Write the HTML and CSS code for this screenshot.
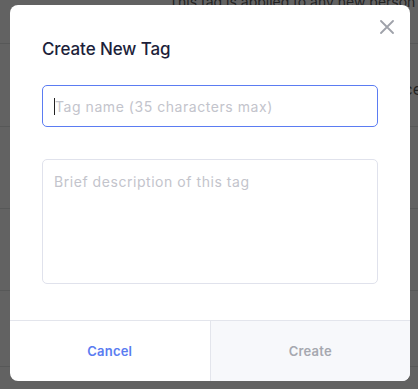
FILE: index.html
```html
<!DOCTYPE html>
<html>
<head>
<meta charset="utf-8">
<link rel="stylesheet" href="styles.css">
</head>
<body>
<div class="bg">
  <div class="bg-text">This tag is applied to any new person</div>
  <div class="bg-row r1"></div>
  <div class="bg-row r2"><span class="bg-side">ce</span></div>
  <div class="bg-row r3"></div>
  <div class="bg-row r4"></div>
  <div class="bg-row r5"></div>
</div>
<div class="modal">
  <button class="close" aria-label="Close">
    <svg width="14" height="14" viewBox="0 0 14 14"><path d="M1 1L13 13M13 1L1 13" stroke="#9fa2aa" stroke-width="1.8" stroke-linecap="round"/></svg>
  </button>
  <div class="body">
    <h2 class="title">Create New Tag</h2>
    <div class="field focused"><span class="caret"></span><span class="ph">Tag name (35 characters max)</span></div>
    <div class="field area"><span class="ph">Brief description of this tag</span></div>
  </div>
  <div class="footer">
    <div class="btn cancel">Cancel</div>
    <div class="btn create">Create</div>
  </div>
</div>
</body>
</html>
```
FILE: styles.css
```css
html, body {
  margin: 0;
  padding: 0;
}
body {
  width: 418px;
  height: 389px;
  overflow: hidden;
  background: #626262;
  font-family: "Inter", "Noto Sans", sans-serif;
  position: relative;
}
.bg {
  display: flex;
  flex-direction: column;
}
.bg-text {
  height: 0;
  padding-left: 169px;
  font-size: 14px;
  line-height: 14px;
  color: #222;
  transform: translateY(-5px);
}
.bg-row {
  border-bottom: 1px solid #575858;
  display: flex;
  justify-content: flex-end;
  align-items: flex-start;
}
.r1 { height: 43px; }
.r2 { height: 82px; }
.r3 { height: 81px; }
.r4 { height: 81px; }
.r5 { height: 75px; }
.bg-side {
  color: #222;
  font-size: 16px;
  margin-top: 35px;
  margin-right: -4px;
}
.modal {
  position: absolute;
  left: 10px;
  top: 5px;
  width: 400px;
  height: 376px;
  background: #fff;
  border-radius: 8px;
  overflow: hidden;
  display: flex;
  flex-direction: column;
}
.close {
  position: absolute;
  right: 16px;
  top: 15px;
  width: 14px;
  height: 14px;
  padding: 0;
  border: 0;
  background: none;
  display: flex;
}
.body {
  flex: 1;
  padding: 32px 32px 0 32px;
  display: flex;
  flex-direction: column;
}
.title {
  margin: 0 0 24px 0;
  font-size: 17px;
  line-height: 24px;
  font-weight: 500;
  color: #1d1f3b;
  letter-spacing: -0.1px;
}
.field {
  box-sizing: border-box;
  width: 336px;
  height: 42px;
  border: 1px solid #e0e2ec;
  border-radius: 5px;
  padding: 0 11px;
  display: flex;
  align-items: center;
  font-size: 14px;
}
.field.focused {
  border-color: #5b7cf2;
}
.caret {
  width: 1px;
  height: 17px;
  background: #222;
  margin-right: 0;
}
.ph {
  color: #c3c4cc;
  letter-spacing: 0.55px;
}
.field.area {
  margin-top: 32px;
  height: 125px;
  align-items: flex-start;
  padding-top: 13px;
}
.footer {
  height: 60px;
  border-top: 1px solid #e3e5ec;
  display: flex;
}
.btn {
  flex: 1;
  display: flex;
  align-items: center;
  justify-content: center;
  font-size: 13px;
  font-weight: 600;
  letter-spacing: 0.2px;
}
.cancel {
  color: #5a7cf1;
}
.create {
  color: #a6a8b0;
  background: #f7f8fb;
  border-left: 1px solid #e3e5ec;
}
```
